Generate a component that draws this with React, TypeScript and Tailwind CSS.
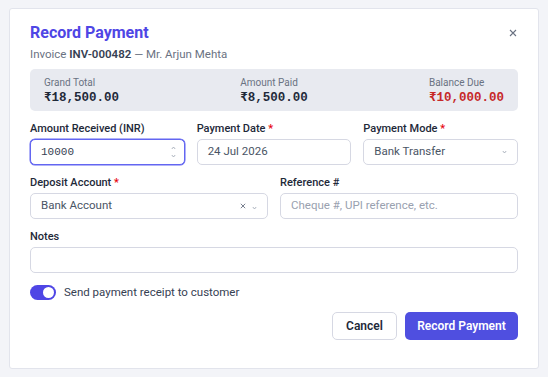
import { useState } from "react";

const labelCls = "block h-4 leading-4 text-[11px] font-medium text-gray-800";
const boxCls =
    "flex items-center h-[26px] w-full rounded-[5px] border border-[#d6d8e3] bg-white px-2.5 text-[11.5px]";
const inputCls = `${boxCls} text-gray-600`;
const mono = { fontFamily: "'Liberation Mono', 'DejaVu Sans Mono', monospace" };

function Req() {
    return <span className="text-red-600"> *</span>;
}

function Chevron() {
    return (
        <svg width="5" height="4" viewBox="0 0 5 4" className="text-gray-400">
            <path d="M0.8 1 L2.5 3 L4.2 1" fill="none" stroke="currentColor" strokeWidth="0.8" />
        </svg>
    );
}

export default function App() {
    const [sendReceipt, setSendReceipt] = useState(true);

    return (
        <div
            className="min-h-[377px] bg-[#f3f4f8] px-[9px] pt-2"
            style={{ fontFamily: "Roboto, 'Noto Sans', sans-serif" }}
        >
            <div className="rounded-[3px] border border-[#e2e4ec] bg-white px-5 pt-[14px] pb-[28px]">
                {/* Header */}
                <div className="flex items-start justify-between">
                    <div>
                        <h1 className="text-[16px] leading-5 font-bold text-[#4f46e5]">Record Payment</h1>
                        <p className="mt-[3px] text-[11.5px] leading-4 text-gray-500">
                            Invoice <span className="font-semibold text-gray-700">INV-000482</span> — Mr. Arjun Mehta
                        </p>
                    </div>
                    <button className="mt-[6px] mr-[1px] text-gray-500">
                        <svg width="8" height="8" viewBox="0 0 8 8">
                            <path d="M1 1 L7 7 M7 1 L1 7" stroke="currentColor" strokeWidth="1.1" />
                        </svg>
                    </button>
                </div>

                {/* Summary */}
                <div className="mt-[7px] flex justify-between rounded-[5px] bg-[#e8eaf0] px-[14px] pt-[7px] pb-[5px]">
                    {[
                        { label: "Grand Total", value: "₹18,500.00", cls: "text-gray-800" },
                        { label: "Amount Paid", value: "₹8,500.00", cls: "text-gray-800" },
                        { label: "Balance Due", value: "₹10,000.00", cls: "text-[#c62828]" },
                    ].map((s) => (
                        <div key={s.label}>
                            <div className="text-[10px] leading-[14px] text-gray-500">{s.label}</div>
                            <div className={`text-[12.5px] leading-4 font-semibold ${s.cls}`} style={mono}>
                                {s.value}
                            </div>
                        </div>
                    ))}
                </div>

                {/* Form */}
                <div className="mt-[10px] grid grid-cols-3 gap-x-3">
                    <div>
                        <label className={labelCls}>Amount Received (INR)</label>
                        <div className="mt-[2px] flex h-[26px] items-center justify-between rounded-[5px] border border-[#6366f1] bg-white pl-2.5 pr-2 ring-[0.5px] ring-[#6366f1]">
                            <span className="text-[11px] text-gray-700" style={mono}>
                                10000
                            </span>
                            <svg width="5" height="12" viewBox="0 0 5 12" className="text-gray-400">
                                <path d="M0.8 3 L2.5 1 L4.2 3 M0.8 9 L2.5 11 L4.2 9" fill="none" stroke="currentColor" strokeWidth="0.8" />
                            </svg>
                        </div>
                    </div>
                    <div>
                        <label className={labelCls}>
                            Payment Date<Req />
                        </label>
                        <div className={`mt-[2px] ${inputCls}`}>24 Jul 2026</div>
                    </div>
                    <div>
                        <label className={labelCls}>
                            Payment Mode<Req />
                        </label>
                        <div className={`mt-[2px] justify-between pr-2.5 ${inputCls}`}>
                            <span>Bank Transfer</span>
                            <Chevron />
                        </div>
                    </div>
                </div>

                <div className="mt-[10px] grid grid-cols-2 gap-3">
                    <div>
                        <label className={labelCls}>
                            Deposit Account<Req />
                        </label>
                        <div className={`mt-[2px] justify-between pr-2.5 ${inputCls}`}>
                            <span>Bank Account</span>
                            <span className="flex items-center gap-[6px]">
                                <svg width="6" height="6" viewBox="0 0 6 6" className="text-gray-500">
                                    <path d="M0.8 0.8 L5.2 5.2 M5.2 0.8 L0.8 5.2" stroke="currentColor" strokeWidth="0.9" />
                                </svg>
                                <span className="mt-[3px]">
                                    <Chevron />
                                </span>
                            </span>
                        </div>
                    </div>
                    <div>
                        <label className={labelCls}>Reference #</label>
                        <div className={`mt-[2px] ${boxCls} text-gray-400`}>Cheque #, UPI reference, etc.</div>
                    </div>
                </div>

                <div className="mt-[10px]">
                    <label className={labelCls}>Notes</label>
                    <div className={`mt-[2px] ${inputCls}`}></div>
                </div>

                {/* Toggle */}
                <div className="mt-[11px] flex items-center gap-2">
                    <button
                        onClick={() => setSendReceipt(!sendReceipt)}
                        className={`flex h-[15px] w-[26px] items-center rounded-full px-[2px] ${
                            sendReceipt ? "justify-end bg-[#4f46e5]" : "justify-start bg-gray-300"
                        }`}
                    >
                        <span className="h-[11px] w-[11px] rounded-full bg-white" />
                    </button>
                    <span className="text-[11.5px] leading-4 text-gray-700">Send payment receipt to customer</span>
                </div>

                {/* Footer */}
                <div className="mt-3 flex justify-end gap-2">
                    <button className="h-7 w-[65px] rounded-[5px] border border-[#d6d8e3] bg-white text-[12px] font-semibold text-gray-800">
                        Cancel
                    </button>
                    <button className="h-7 w-[113px] rounded-[5px] bg-[#4f4fe0] text-[12px] font-semibold text-white">
                        Record Payment
                    </button>
                </div>
            </div>
        </div>
    );
}
